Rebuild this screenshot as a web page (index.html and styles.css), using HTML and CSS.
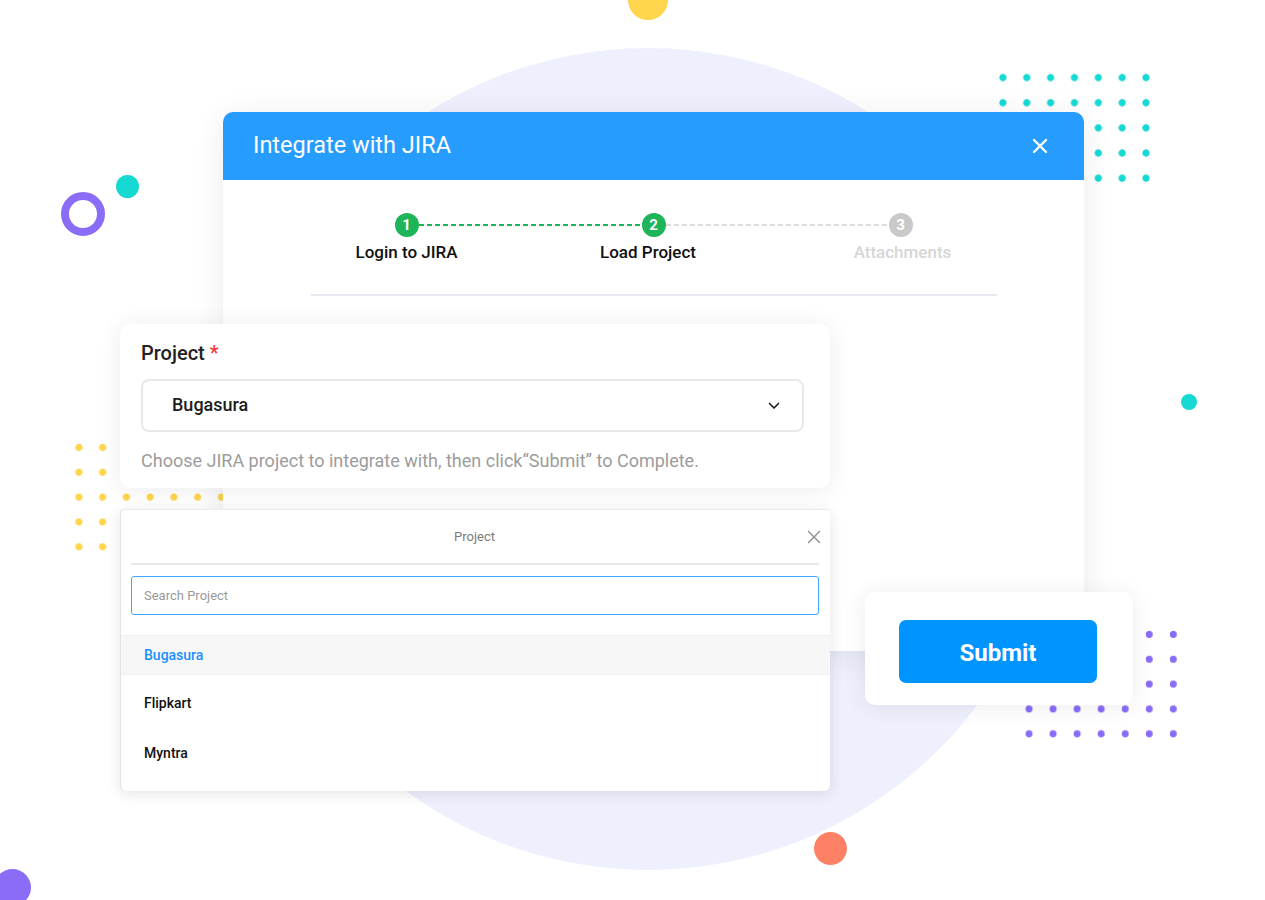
FILE: index.html
```html
<!DOCTYPE html>
<html lang="en">
<head>
<meta charset="utf-8">
<title>Integrate with JIRA</title>
<link rel="stylesheet" href="styles.css">
</head>
<body>
<div class="stage">
  <div class="deco bg-circle"></div>
  <div class="deco sun"></div>
  <div class="deco ring"></div>
  <div class="deco dot-teal-left"></div>
  <div class="deco dot-teal-right"></div>
  <div class="deco dot-orange"></div>
  <div class="deco dot-purple"></div>
  <div class="deco dots dots-teal"></div>
  <div class="deco dots dots-yellow"></div>
  <div class="deco dots dots-purple"></div>

  <section class="modal">
    <header class="modal-head">
      <h1 class="modal-title">Integrate with JIRA</h1>
      <svg class="modal-close" width="16" height="16" viewBox="0 0 16 16"><path d="M2 2L14 14M14 2L2 14" stroke="#fff" stroke-width="2.4" stroke-linecap="round"/></svg>
    </header>
    <div class="stepper">
      <div class="step-track">
        <span class="step-dot done">1</span>
        <span class="step-line done"></span>
        <span class="step-dot done">2</span>
        <span class="step-line"></span>
        <span class="step-dot">3</span>
      </div>
      <div class="step-labels">
        <span class="step-label">Login to JIRA</span>
        <span class="step-label">Load Project</span>
        <span class="step-label muted">Attachments</span>
      </div>
    </div>
    <div class="modal-sep"></div>
  </section>

  <section class="card project-card">
    <div class="field-label">Project <span class="req">*</span></div>
    <div class="select">
      <span class="select-value">Bugasura</span>
      <svg class="chev" width="12" height="8" viewBox="0 0 12 8"><path d="M1.5 1.5L6 6L10.5 1.5" fill="none" stroke="#222" stroke-width="1.7" stroke-linecap="round" stroke-linejoin="round"/></svg>
    </div>
    <p class="help">Choose JIRA project to integrate with, then click“Submit” to Complete.</p>
  </section>

  <section class="picker">
    <div class="picker-head">
      <span class="picker-title">Project</span>
      <svg class="picker-close" width="14" height="14" viewBox="0 0 14 14"><path d="M1.5 1.5L12.5 12.5M12.5 1.5L1.5 12.5" stroke="#8c8c8c" stroke-width="1.4" stroke-linecap="round"/></svg>
    </div>
    <div class="picker-sep"></div>
    <div class="search">Search Project</div>
    <ul class="options">
      <li class="option active">Bugasura</li>
      <li class="option">Flipkart</li>
      <li class="option">Myntra</li>
    </ul>
  </section>

  <section class="card submit-card">
    <button class="submit-btn">Submit</button>
  </section>
</div>
</body>
</html>
```

FILE: styles.css
```css
* { box-sizing: border-box; }
html, body { margin: 0; padding: 0; background: #fff; }
body { font-family: Roboto, "Noto Sans", "Liberation Sans", sans-serif; color: #222; }

.stage { position: relative; width: 1265px; height: 900px; overflow: hidden; background: #fff; }

.deco { position: absolute; border-radius: 50%; }
.bg-circle { left: 237px; top: 48px; width: 822px; height: 822px; background: #eff0fd; }
.sun { left: 628px; top: -20px; width: 40px; height: 40px; background: #ffd54d; }
.ring { left: 61px; top: 192px; width: 44px; height: 44px; border: 8px solid #8a6cf7; }
.dot-teal-left { left: 116px; top: 175px; width: 23px; height: 23px; background: #16d9d3; }
.dot-teal-right { left: 1181px; top: 394px; width: 16px; height: 16px; background: #16d9d3; }
.dot-orange { left: 814px; top: 832px; width: 33px; height: 33px; background: #ff8165; }
.dot-purple { left: -6px; top: 869px; width: 37px; height: 37px; background: #8a6cf7; }

.dots { border-radius: 0; }
.dots-teal { left: 991px; top: 65px; width: 167px; height: 126px;
  background: radial-gradient(circle, #16d9d3 3.3px, transparent 3.9px) 0 0 / 23.85px 25.15px; }
.dots-yellow { left: 67.4px; top: 435px; width: 167px; height: 124px;
  background: radial-gradient(circle, #ffd54d 3.3px, transparent 3.9px) 0 0 / 23.75px 24.85px; }
.dots-purple { left: 1017px; top: 622px; width: 168px; height: 125px;
  background: radial-gradient(circle, #8a6cf7 3.3px, transparent 3.9px) 0 0 / 24.05px 24.85px; }

/* Modal */
.modal { position: absolute; left: 223px; top: 112px; width: 861px; height: 539px;
  background: #fff; border-radius: 10px 10px 0 0;
  box-shadow: 0 4px 30px rgba(40, 40, 60, 0.09); }
.modal-head { height: 68px; background: #279cff; border-radius: 10px 10px 0 0;
  display: flex; align-items: center; justify-content: space-between; padding: 0 36px 3px 30px; }
.modal-title { margin: 0; font-size: 23.5px; font-weight: 400; color: #fff; letter-spacing: 0; }
.modal-close { display: block; margin-top: 3px; }

.stepper { width: 741px; margin: 0 auto; padding-top: 33px; }
.step-track { display: flex; align-items: center; padding: 0 111.5px; }
.step-dot { width: 24px; height: 24px; border-radius: 50%; background: #c9c9c9; color: #fff;
  font-size: 15px; font-weight: 700; display: flex; align-items: center; justify-content: center; flex: none; }
.step-dot.done { background: #1db45a; }
.step-line { flex: 1; height: 2px;
  background: repeating-linear-gradient(to right, #dcdcdc 0 5px, transparent 5px 8px); }
.step-line.done { background: repeating-linear-gradient(to right, #1db45a 0 5px, transparent 5px 8px); }
.step-labels { display: grid; grid-template-columns: repeat(3, 1fr); margin-top: 5px; }
.step-label { text-align: center; font-size: 17px; font-weight: 500; color: #111; line-height: 20px; }
.step-labels .step-label:nth-child(2) { padding-right: 11px; }
.step-labels .step-label:nth-child(3) { padding-left: 4px; }
.step-label.muted { color: #d6d6d6; }
.modal-sep { height: 2px; background: #e7eaf2; margin: 32px 87px 0 88px; }

/* Cards */
.card { position: absolute; background: #fff; border-radius: 10px;
  box-shadow: 0 2px 22px rgba(40, 40, 60, 0.09); }
.project-card { left: 120px; top: 324px; width: 710px; height: 164px; padding: 17px 26px 0 21px; }
.field-label { font-size: 20px; font-weight: 500; color: #222; line-height: 24px; }
.req { color: #f5393b; }
.select { margin-top: 14px; height: 53px; border: 2px solid #e8e8e8; border-radius: 8px;
  display: flex; align-items: center; justify-content: space-between; padding: 0 22px 0 29px; }
.select-value { font-size: 18px; font-weight: 500; color: #1d1d1d; padding-bottom: 2px; }
.chev { display: block; }
.help { margin: 18px 0 0; font-size: 18px; color: #9c9c9c; line-height: 22px; }

.picker { position: absolute; left: 120px; top: 509px; width: 710px; height: 282px; background: #fff;
  border-radius: 4px 4px 6px 6px; border-left: 1px solid #e3e3e3; border-top: 1px solid #ececec;
  box-shadow: 0 3px 14px rgba(40, 40, 60, 0.12); }
.picker-head { position: relative; height: 53px; display: flex; align-items: center; justify-content: center; }
.picker-title { font-size: 13px; color: #7b7b7b; margin-left: -2px; }
.picker-close { position: absolute; right: 9px; top: 20px; }
.picker-sep { height: 2px; background: #e8e8e8; margin: 0 11px 0 10px; }
.search { margin: 11px 11px 0 10px; height: 39px; border: 1.5px solid #3ea6ff; border-radius: 3px;
  display: flex; align-items: center; padding-left: 12px; font-size: 13px; color: #9a9a9a; }
.options { list-style: none; margin: 20px 0 0; padding: 0; }
.option { height: 50px; display: flex; align-items: center; padding-left: 23px; font-size: 14px; font-weight: 500; color: #111; }
.option.active { height: 40px; background: #f7f7f7; color: #1a90ff; border-top: 1px solid #f0f0f0; border-bottom: 1px solid #f0f0f0; }
.option.active + .option { margin-top: 3px; }

.submit-card { left: 865px; top: 592px; width: 268px; height: 113px; padding: 28px 0 0 34px; }
.submit-btn { width: 198px; height: 63px; border: none; border-radius: 7px; background: #0094ff;
  color: #fff; font-family: inherit; font-size: 24px; font-weight: 700; cursor: pointer; padding: 2px 0 0; }
```
